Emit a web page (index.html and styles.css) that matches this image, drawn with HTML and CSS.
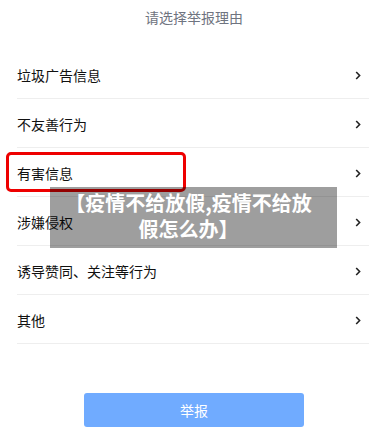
FILE: index.html
```html
<!DOCTYPE html>
<html lang="zh">
<head>
<meta charset="utf-8">
<link rel="stylesheet" href="styles.css">
</head>
<body>
<div class="page">
  <div class="title">请选择举报理由</div>
  <ul class="list">
    <li class="row"><span>垃圾广告信息</span><svg class="chev" width="6" height="9" viewBox="0 0 6 9"><polyline points="1.2,1 4.6,4.5 1.2,8" fill="none" stroke="#222" stroke-width="1.6"/></svg></li>
    <li class="row"><span>不友善行为</span><svg class="chev" width="6" height="9" viewBox="0 0 6 9"><polyline points="1.2,1 4.6,4.5 1.2,8" fill="none" stroke="#222" stroke-width="1.6"/></svg></li>
    <li class="row"><span>有害信息</span><svg class="chev" width="6" height="9" viewBox="0 0 6 9"><polyline points="1.2,1 4.6,4.5 1.2,8" fill="none" stroke="#222" stroke-width="1.6"/></svg></li>
    <li class="row"><span>涉嫌侵权</span><svg class="chev" width="6" height="9" viewBox="0 0 6 9"><polyline points="1.2,1 4.6,4.5 1.2,8" fill="none" stroke="#222" stroke-width="1.6"/></svg></li>
    <li class="row"><span>诱导赞同、关注等行为</span><svg class="chev" width="6" height="9" viewBox="0 0 6 9"><polyline points="1.2,1 4.6,4.5 1.2,8" fill="none" stroke="#222" stroke-width="1.6"/></svg></li>
    <li class="row"><span>其他</span><svg class="chev" width="6" height="9" viewBox="0 0 6 9"><polyline points="1.2,1 4.6,4.5 1.2,8" fill="none" stroke="#222" stroke-width="1.6"/></svg></li>
  </ul>
  <div class="actions"><button class="submit">举报</button></div>
  <div class="highlight"></div>
  <div class="caption">【疫情不给放假,疫情不给放<br>假怎么办】</div>
</div>
</body>
</html>
```
FILE: styles.css
```css
html, body {
  margin: 0;
  padding: 0;
  background: #fff;
}
body {
  font-family: "Noto Sans CJK SC", "Noto Sans", sans-serif;
  color: #111;
}
.page {
  position: relative;
  width: 388px;
  height: 435px;
  overflow: hidden;
}
.title {
  height: 50px;
  padding-top: 6px;
  box-sizing: border-box;
  text-align: center;
  font-size: 14px;
  line-height: 22px;
  color: #6f7480;
}
.list {
  list-style: none;
  margin: 0 19px 0 17px;
  padding: 0;
}
.row {
  display: flex;
  align-items: center;
  justify-content: space-between;
  height: 46px;
  padding-top: 2px;
  box-sizing: content-box;
  border-bottom: 1px solid #eeeeee;
  font-size: 14px;
  line-height: 20px;
}
.chev {
  margin-right: 8px;
}
.actions {
  display: flex;
  justify-content: center;
  padding-top: 49px;
}
.submit {
  width: 220px;
  height: 34px;
  border: none;
  border-radius: 3px;
  background: #70abff;
  color: #fff;
  font-family: "Noto Sans CJK SC", "Noto Sans", sans-serif;
  font-size: 14px;
  padding: 0;
}
.highlight {
  position: absolute;
  left: 6px;
  top: 152px;
  width: 180px;
  height: 40px;
  box-sizing: border-box;
  border: 3px solid #ee0000;
  border-radius: 5px;
}
.caption {
  position: absolute;
  left: 50px;
  top: 187px;
  width: 287px;
  height: 61px;
  padding-top: 3px;
  padding-right: 10px;
  box-sizing: border-box;
  background: rgba(0, 0, 0, 0.38);
  color: #fff;
  font-weight: 700;
  font-size: 20px;
  line-height: 26px;
  text-align: center;
}
```
